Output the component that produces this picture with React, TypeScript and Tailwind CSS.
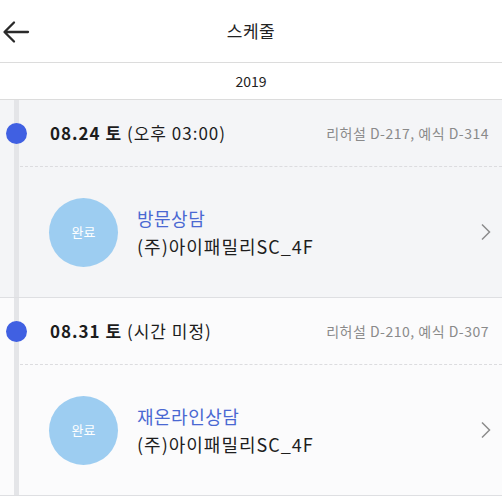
import React from 'react';

interface Schedule {
  date: string;
  day: string;
  time: string;
  dday: string;
  title: string;
  place: string;
  bg: string;
}

const schedules: Schedule[] = [
  {
    date: '08.24',
    day: '토',
    time: '(오후 03:00)',
    dday: '리허설 D-217, 예식 D-314',
    title: '방문상담',
    place: '(주)아이패밀리SC_4F',
    bg: 'bg-[#f4f5f7]',
  },
  {
    date: '08.31',
    day: '토',
    time: '(시간 미정)',
    dday: '리허설 D-210, 예식 D-307',
    title: '재온라인상담',
    place: '(주)아이패밀리SC_4F',
    bg: 'bg-[#fbfbfc]',
  },
];

const ScheduleItem: React.FC<{ item: Schedule }> = ({ item }) => {
  return (
    <div className={`flex border-b border-[#dedfe2] ${item.bg}`}>
      {/* timeline gutter */}
      <div className="relative w-[20px] shrink-0">
        <div className="ml-[14px] h-full w-[5px] bg-[#e4e5e8]" />
        <div className="absolute left-[6px] top-[23px] h-[21px] w-[21px] rounded-full bg-[#4060e2]" />
      </div>

      <div className="flex-1 min-w-0">
        <div className="flex h-[67px] items-center justify-between border-b border-dashed border-[#dcdcdf] pl-[30px] pr-[13px]">
          <div className="text-[17px] tracking-[1px] text-[#1c1c1c]">
            <span className="font-bold">
              {item.date} {item.day}
            </span>{' '}
            <span>{item.time}</span>
          </div>
          <div className="text-[14px] tracking-[0.5px] text-[#8a8a8a]">{item.dday}</div>
        </div>

        <div className="flex h-[130px] items-center pl-[29px] pr-[10px]">
          <div className="flex h-[69px] w-[69px] shrink-0 items-center justify-center rounded-full bg-[#9dcdf1] text-[13px] text-white">
            완료
          </div>
          <div className="ml-[19px] flex flex-1 flex-col gap-[6px]">
            <div className="text-[18px] leading-[22px] tracking-[0.5px] text-[#4a68d2]">{item.title}</div>
            <div className="text-[18px] leading-[22px] tracking-[1px] text-[#1e1e1e]">{item.place}</div>
          </div>
          <svg width="12" height="18" viewBox="0 0 12 18" fill="none" stroke="#8c8c8c" strokeWidth="1.5">
            <path d="M2 1.5 L9.5 9 L2 16.5" />
          </svg>
        </div>
      </div>
    </div>
  );
};

export default function App() {
  return (
    <div
      className="w-[502px] h-[500px] overflow-hidden bg-white"
      style={{ fontFamily: '"Noto Sans CJK KR", "Noto Sans", sans-serif' }}
    >
      <div className="relative flex h-[63px] items-center justify-center border-b border-[#dcdcdc]">
        <svg
          className="absolute left-[2px] top-[20px]"
          width="28"
          height="24"
          viewBox="0 0 28 24"
          fill="none"
          stroke="#2a2a2a"
          strokeWidth="2.3"
          strokeLinecap="round"
          strokeLinejoin="round"
        >
          <path d="M26 12 H3 M12 2.5 L2.5 12 L12 21.5" />
        </svg>
        <span className="text-[17px] tracking-[0.5px] text-[#222]">스케줄</span>
      </div>

      <div className="flex h-[37px] items-center justify-center border-b border-[#dcdcdc] text-[14px] text-[#222]">
        2019
      </div>

      {schedules.map((s) => (
        <ScheduleItem key={s.date} item={s} />
      ))}
    </div>
  );
}
